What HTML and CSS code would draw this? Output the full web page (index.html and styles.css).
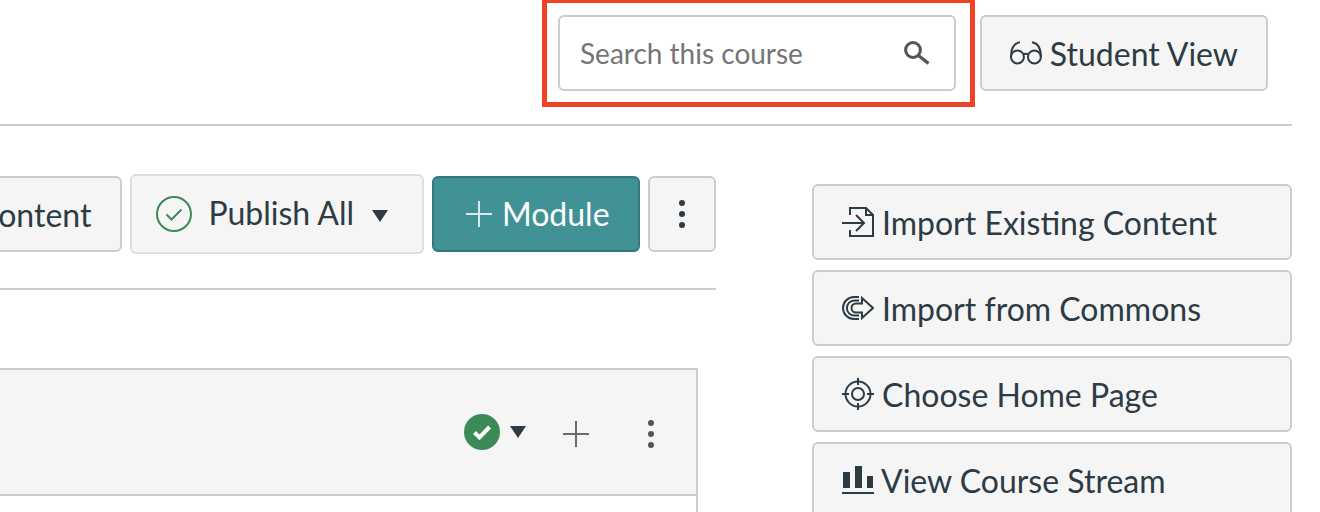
FILE: index.html
```html
<!DOCTYPE html>
<html lang="en">
<head>
<meta charset="utf-8">
<title>Course modules</title>
<link rel="stylesheet" href="styles.css">
</head>
<body>
<div class="page">
  <header class="topbar">
    <div class="search">
      <input class="search-input" type="text" placeholder="Search this course" aria-label="Search this course">
      <svg class="search-icon" viewBox="0 0 26 24" width="26" height="24"><circle cx="9" cy="9" r="7.4" fill="none" stroke="#555" stroke-width="3"/><path d="M14.5 14.5 L24.5 22.5" stroke="#555" stroke-width="3.2" fill="none"/></svg>
    </div>
    <button class="btn btn-student" type="button">
      <svg class="icon-glasses" viewBox="0 0 32 24" width="32" height="24"><g fill="none" stroke="#2d3b45" stroke-width="2"><circle cx="7.5" cy="16" r="6.5"/><circle cx="24.5" cy="16" r="6.5"/><path d="M1 16 C1 8 4 2 10 1.2"/><path d="M31 16 C31 8 28 2 22 1.2"/><path d="M13.5 13.5 Q16 12 18.5 13.5"/></g></svg>
      <span class="label">Student View</span>
    </button>
  </header>
  <div class="annotation" aria-hidden="true"></div>
  <div class="columns">
    <main class="main">
      <div class="toolbar">
        <button class="btn btn-tool" type="button"><span class="label">Content</span></button>
        <button class="btn btn-publish" type="button">
          <svg viewBox="0 0 36 36" width="36" height="36"><circle cx="18" cy="18" r="17" fill="none" stroke="#3c8a57" stroke-width="2"/><path d="M10.5 18.5 L15.5 23.5 L25.5 13.5" fill="none" stroke="#3c8a57" stroke-width="2"/></svg>
          <span class="publish-label">Publish All</span>
          <svg class="caret" viewBox="0 0 16 12" width="16" height="12"><path d="M0 0 H16 L8 12 Z" fill="#2d3b45"/></svg>
        </button>
        <button class="btn btn-module" type="button">
          <svg viewBox="0 0 26 26" width="26" height="26"><path d="M13 0 V26 M0 13 H26" stroke="#d9eaea" stroke-width="2" fill="none"/></svg>
          <span>Module</span>
        </button>
        <button class="btn btn-kebab" type="button" aria-label="More">
          <svg viewBox="0 0 8 30" width="8" height="30"><circle cx="4" cy="4" r="3" fill="#2d3b45"/><circle cx="4" cy="15" r="3" fill="#2d3b45"/><circle cx="4" cy="26" r="3" fill="#2d3b45"/></svg>
        </button>
      </div>
      <section class="module">
        <div class="module-head">
          <svg viewBox="0 0 36 36" width="36" height="36"><circle cx="18" cy="18" r="18" fill="#3c8a57"/><path d="M10.5 18.5 L15.5 23.5 L25.5 13" fill="none" stroke="#fff" stroke-width="4"/></svg>
          <svg class="head-caret" viewBox="0 0 16 12" width="16" height="12"><path d="M0 0 H16 L8 12 Z" fill="#2d3b45"/></svg>
          <svg class="head-plus" viewBox="0 0 26 26" width="26" height="26"><path d="M13 0 V26 M0 13 H26" stroke="#6b6b6b" stroke-width="2" fill="none"/></svg>
          <svg class="head-dots" viewBox="0 0 8 30" width="8" height="30"><circle cx="4" cy="4" r="3" fill="#555"/><circle cx="4" cy="15" r="3" fill="#555"/><circle cx="4" cy="26" r="3" fill="#555"/></svg>
        </div>
      </section>
    </main>
    <aside class="side">
      <button class="btn btn-side" type="button">
        <svg viewBox="0 0 32 30" width="32" height="30"><g fill="none" stroke="#2d3b45" stroke-width="2"><path d="M8 8 V1 H24 L31 8 V29 H8 V23"/><path d="M24 1 V8 H31"/><path d="M0 16 H21"/><path d="M14 8 L22 16 L14 24"/></g></svg>
        <span class="label">Import Existing Content</span>
      </button>
      <button class="btn btn-side" type="button">
        <svg viewBox="0 0 32 24" width="32" height="24"><g fill="none" stroke="#2d3b45" stroke-width="2"><path d="M20 2 V7.5 H14 a4.5 4.5 0 0 0 0 9 H20 V22 L31 12 Z"/><path d="M17 1 H12 a11 11 0 0 0 0 22 H17"/><path d="M17 4.4 H12.5 a7.6 7.6 0 0 0 0 15.2 H17"/></g></svg>
        <span class="label">Import from Commons</span>
      </button>
      <button class="btn btn-side" type="button">
        <svg viewBox="0 0 32 32" width="32" height="32"><g fill="none" stroke="#2d3b45" stroke-width="2"><circle cx="16" cy="16" r="12.5"/><circle cx="16" cy="16" r="6"/><path d="M16 0 V7 M16 25 V32 M0 16 H7 M25 16 H32"/></g></svg>
        <span class="label">Choose Home Page</span>
      </button>
      <button class="btn btn-side btn-stream" type="button">
        <svg viewBox="0 0 32 28" width="32" height="28"><path d="M1 6 H8 V22 H1 Z M13 0 H20 V22 H13 Z M25 10 H31 V22 H25 Z M0 26 H32 V28 H0 Z" fill="#2d3b45"/></svg>
        <span class="label">View Course Stream</span>
      </button>
    </aside>
  </div>
</div>
</body>
</html>
```
FILE: styles.css
```css
* { box-sizing: border-box; }
html, body { margin: 0; height: 100%; overflow: hidden; background: #fff; }
body { font-family: Lato, "Liberation Sans", sans-serif; color: #2d3b45; }
.page { position: relative; width: 1292px; height: 512px; overflow: hidden; }

.btn {
  display: flex; align-items: center; flex-shrink: 0;
  height: 76px; padding: 0 28px; white-space: nowrap;
  font: 32px/1 Lato, "Liberation Sans", sans-serif; color: #2d3b45;
  background: #f5f5f5; border: 2px solid #c7cdd1; border-radius: 6px;
}
.label { padding-top: 2px; }
.topbar {
  display: flex; justify-content: flex-end; gap: 24px;
  height: 126px; padding: 15px 24px 0 0;
  border-bottom: 2px solid #c7cdd1;
}
.search {
  display: flex; align-items: center; width: 398px; height: 76px;
  padding: 0 24px 0 20px; background: #fff;
  border: 2px solid #c7cdd1; border-radius: 6px;
}
.search-input {
  flex: 1; min-width: 0; border: 0; padding: 2px 0 0; outline: 0; background: transparent;
  font: 28px/1.2 Lato, "Liberation Sans", sans-serif; color: #2d3b45;
}
.search-input::placeholder { color: #757575; opacity: 1; }
.search-icon { flex-shrink: 0; }
.btn-student { width: 288px; padding-left: 28px; gap: 8px; }
.annotation {
  position: absolute; left: 542px; top: -2px; width: 433px; height: 109px;
  border: 5px solid #ee4426;
}
.columns { display: flex; gap: 96px; padding-top: 48px; }
.main { width: 716px; flex-shrink: 0; }
.toolbar {
  display: flex; justify-content: flex-end; align-items: center; gap: 8px;
  height: 116px; padding: 2px 0 36px; overflow: hidden;
  border-bottom: 2px solid #c7cdd1;
}
.btn-tool { padding: 0 29px; }
.btn-publish { height: 80px; padding: 0 34px 0 24px; border-color: #dcdedf; }
.publish-label { margin: -2px 18px 0 16px; }
.caret { margin-top: 4px; }
.btn-module {
  width: 208px; padding: 0 0 0 32px; gap: 10px; color: #fff;
  background: #409294; border-color: #33777a;
}
.btn-kebab { width: 68px; padding: 0; justify-content: center; }
.module { width: 698px; margin-top: 78px; height: 200px; border: solid #c7cdd1; border-width: 2px 2px 0 0; }
.module-head {
  display: flex; align-items: center; justify-content: flex-end;
  height: 126px; padding-right: 41px; background: #f5f5f5;
  border-bottom: 2px solid #c7cdd1;
}
.head-caret { margin-left: 10px; }
.head-plus { margin: 4px 0 0 37px; }
.head-dots { margin: 4px 0 0 58px; }
.side { display: flex; flex-direction: column; gap: 10px; width: 480px; padding-top: 10px; }
.btn-side { width: 480px; padding: 0 0 0 28px; gap: 8px; }
.btn-stream { gap: 7px; }
```
